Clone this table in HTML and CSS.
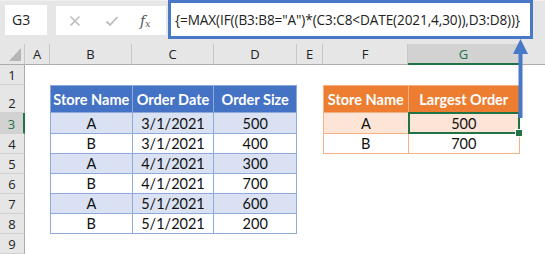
FILE: index.html
```html
<!DOCTYPE html>
<html>
<head>
    <link rel="stylesheet" href="styles.css">
</head>
<body>
<div class="workbook">
    <div class="formula-bar">
        <div class="name-box">G3</div>
        <div class="fx-buttons">
            <svg class="btn-icon" width="12" height="12" viewBox="0 0 12 12">
                <path d="M1.5 1.5 L10.5 10.5 M10.5 1.5 L1.5 10.5" stroke="#bcbcbc" stroke-width="1.6" fill="none"/>
            </svg>
            <svg class="btn-icon" width="14" height="12" viewBox="0 0 14 12">
                <path d="M1.5 6.5 L5 10 L12.5 2" stroke="#bcbcbc" stroke-width="1.8" fill="none"/>
            </svg>
            <span class="fx">f<sub>x</sub></span>
        </div>
        <div class="formula">{=MAX(IF((B3:B8="A")*(C3:C8&lt;DATE(2021,4,30)),D3:D8))}</div>
    </div>

    <div class="sheet">
        <div class="corner"><span class="corner-mark"></span></div>
        <div class="col-head">A</div>
        <div class="col-head">B</div>
        <div class="col-head">C</div>
        <div class="col-head">D</div>
        <div class="col-head">E</div>
        <div class="col-head">F</div>
        <div class="col-head active">G</div>
        <div class="col-head last"></div>

        <div class="row-head r1">1</div>
        <div class="row-head r2">2</div>
        <div class="row-head r3 active">3</div>
        <div class="row-head r4">4</div>
        <div class="row-head r5">5</div>
        <div class="row-head r6">6</div>
        <div class="row-head r7">7</div>
        <div class="row-head r8">8</div>
        <div class="row-head r9">9</div>

        <table class="orders" cellspacing="0" cellpadding="0">
            <colgroup>
                <col style="width:82px">
                <col style="width:82px">
                <col style="width:83px">
            </colgroup>
            <thead>
            <tr class="head-row">
                <th>Store Name</th>
                <th>Order Date</th>
                <th>Order Size</th>
            </tr>
            </thead>
            <tbody>
            <tr class="band first"><td>A</td><td>3/1/2021</td><td>500</td></tr>
            <tr><td>B</td><td>3/1/2021</td><td>400</td></tr>
            <tr class="band"><td>A</td><td>4/1/2021</td><td>300</td></tr>
            <tr><td>B</td><td>4/1/2021</td><td>700</td></tr>
            <tr class="band"><td>A</td><td>5/1/2021</td><td>600</td></tr>
            <tr><td>B</td><td>5/1/2021</td><td>200</td></tr>
            </tbody>
        </table>

        <table class="largest" cellspacing="0" cellpadding="0">
            <colgroup>
                <col style="width:85px">
                <col style="width:112px">
            </colgroup>
            <thead>
            <tr class="head-row">
                <th>Store Name</th>
                <th>Largest Order</th>
            </tr>
            </thead>
            <tbody>
            <tr class="band first"><td>A</td><td class="selected">500<span class="fill-handle"></span></td></tr>
            <tr><td>B</td><td>700</td></tr>
            </tbody>
        </table>
    </div>

    <!-- arrow from the result cell up to the formula -->
    <svg class="pointer" width="17" height="82" viewBox="0 0 17 82">
        <path d="M8.5 1 L16 16 L10.5 16 L10.5 80 L6.5 80 L6.5 16 L1 16 Z" fill="#4a78c8"/>
    </svg>
</div>
</body>
</html>
```

FILE: styles.css
```css
body {
    margin: 0;
    background: #fff;
}

.workbook {
    position: relative;
    width: 545px;
    height: 254px;
    overflow: hidden;
    font-family: "Open Sans", "DejaVu Sans", sans-serif;
}

/* formula bar */

.formula-bar {
    display: flex;
    align-items: flex-start;
    height: 44px;
    background: #e6e6e6;
    border-top: 1px solid #efefef;
    box-sizing: border-box;
}

.name-box {
    margin: 4px 0 0 5px;
    width: 42px;
    height: 30px;
    background: #fff;
    font-size: 14px;
    line-height: 30px;
    padding-left: 7px;
    box-sizing: border-box;
    color: #222;
}

.fx-buttons {
    display: flex;
    align-items: center;
    margin: 5px 0 0 9px;
    width: 110px;
    height: 29px;
    background: #fff;
    padding-left: 13px;
    box-sizing: border-box;
}

.btn-icon {
    margin-right: 24px;
}

.fx {
    font-family: "DejaVu Serif", "Liberation Serif", serif;
    font-style: italic;
    font-size: 14px;
    color: #555;
    margin-left: -3px;
}

.fx sub {
    font-size: 9px;
    vertical-align: -1px;
}

.formula {
    margin: -1px 0 0 2px;
    width: 365px;
    height: 39px;
    border: 3px solid #4a78c8;
    background: #fff;
    box-sizing: border-box;
    font-size: 13.6px;
    line-height: 33px;
    padding-left: 4px;
    color: #222;
    white-space: nowrap;
    letter-spacing: -0.1px;
    overflow: hidden;
}

/* grid of headers and cells */

.sheet {
    display: grid;
    grid-template-columns: 25px 25px 82px 82px 83px 26px 85px 112px 1fr;
    grid-template-rows: 21px 20px 28px 21px 20px 20px 20px 20px 20px 20px;
    background: #fff;
}

.corner {
    position: relative;
    background: #e6e6e6;
    border-right: 1px solid #c6c6c6;
    border-bottom: 1px solid #ababab;
}

.corner-mark {
    position: absolute;
    right: 3px;
    bottom: 3px;
    width: 0;
    height: 0;
    border-left: 12px solid transparent;
    border-bottom: 13px solid #b5b5b5;
}

.col-head {
    background: #e6e6e6;
    border-right: 1px solid #c6c6c6;
    border-bottom: 1px solid #ababab;
    text-align: center;
    font-size: 13px;
    line-height: 20px;
    color: #222;
}

.col-head.last {
    border-right: none;
}

.col-head.active {
    background: #d2d2d2;
    color: #217346;
    border-bottom: 2px solid #217346;
}

.row-head {
    grid-column: 1;
    background: #e6e6e6;
    border-right: 1px solid #ababab;
    border-bottom: 1px solid #d0d0d0;
    text-align: center;
    font-size: 13px;
    color: #222;
    display: flex;
    align-items: flex-end;
    justify-content: center;
    padding-bottom: 1px;
    line-height: 16px;
}

.row-head.active {
    background: #d2d2d2;
    color: #217346;
    border-right: 2px solid #217346;
}

.r1 { grid-row: 2; }
.r2 { grid-row: 3; }
.r3 { grid-row: 4; }
.r4 { grid-row: 5; }
.r5 { grid-row: 6; }
.r6 { grid-row: 7; }
.r7 { grid-row: 8; }
.r8 { grid-row: 9; }
.r9 { grid-row: 10; }

/* excel tables */

table {
    border-collapse: collapse;
    table-layout: fixed;
    font-family: "Lato", "Open Sans", sans-serif;
    font-size: 14.5px;
    color: #111;
    align-self: start;
}

table th, table td {
    text-align: center;
    vertical-align: bottom;
    padding: 0 0 1px 0;
    line-height: 17px;
}

table th {
    font-weight: 700;
    color: #fff;
    height: 27px;
    padding-bottom: 4px;
    box-sizing: border-box;
}

table td {
    height: 20px;
    box-sizing: border-box;
}

table tbody tr.first td {
    height: 21px;
}

.orders {
    grid-column: 3 / 6;
    grid-row: 3 / 10;
    border: 1px solid #8eaadb;
}

.orders th {
    background: #4472c4;
    border-left: 1px solid #8eaadb;
}

.orders td {
    border: 1px solid #8eaadb;
}

.orders .band td {
    background: #d9e1f2;
}

.largest {
    grid-column: 7 / 9;
    grid-row: 3 / 6;
    border: 1px solid #f4b183;
}

.largest th {
    background: #ed7d31;
    border-left: 1px solid #f4b183;
}

.largest td {
    border: 1px solid #f4b183;
}

.largest .band td {
    background: #fce4d6;
}

/* active cell */

.selected {
    position: relative;
}

.selected::after {
    content: "";
    position: absolute;
    left: -1px;
    top: -1px;
    right: -1px;
    bottom: -1px;
    border: 2px solid #217346;
}

.fill-handle {
    position: absolute;
    right: -4px;
    bottom: -4px;
    width: 6px;
    height: 6px;
    background: #217346;
    border: 1px solid #fff;
    z-index: 2;
}

.pointer {
    position: absolute;
    left: 512px;
    top: 38px;
}
```
